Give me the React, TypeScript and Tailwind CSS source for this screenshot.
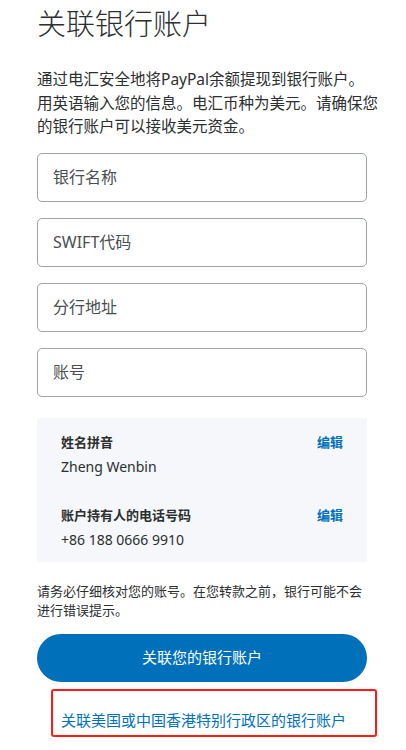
import type React from "react";

const font = { fontFamily: '"Noto Sans", "Noto Sans CJK SC", sans-serif' };

function Field({ placeholder }: { placeholder: string }) {
  return (
    <div className="h-[49px] rounded-[5px] border border-[#9da3a6] bg-white flex items-center px-[15px]">
      <span className="text-[16px] text-[#4a4d4f]">{placeholder}</span>
    </div>
  );
}

function InfoRow({ label, value, className }: { label: string; value: string; className?: string }) {
  return (
    <div className={className}>
      <div className="flex items-center justify-between">
        <p className="text-[13px] leading-[20px] font-bold text-[#2c2e2f]">{label}</p>
        <span className="text-[13px] leading-[20px] font-bold text-[#0070ba]">编辑</span>
      </div>
      <p className="mt-1 text-[14px] leading-[22px] text-[#2c2e2f]">{value}</p>
    </div>
  );
}

export default function App() {
  return (
    <div className="min-h-[750px] bg-white text-[#2c2e2f]" style={font as React.CSSProperties}>
      <div className="w-[330px] ml-[37px] pt-[6px]">
        <h1 className="text-[29px] leading-[36px] font-light text-[#2c2e2f]">关联银行账户</h1>

        <div className="mt-[26px] text-[15.5px] leading-[23.5px] text-[#2c2e2f]">
          <p className="whitespace-nowrap">通过电汇安全地将PayPal余额提现到银行账户。</p>
          <p className="whitespace-nowrap">用英语输入您的信息。电汇币种为美元。请确保您</p>
          <p className="whitespace-nowrap">的银行账户可以接收美元资金。</p>
        </div>

        <div className="mt-[14px] flex flex-col gap-[16px]">
          <Field placeholder="银行名称" />
          <Field placeholder="SWIFT代码" />
          <Field placeholder="分行地址" />
          <Field placeholder="账号" />
        </div>

        <div className="mt-[21px] bg-[#f5f7fa] pl-[24px] pr-[24px] pt-[14px] pb-[11px]">
          <InfoRow label="姓名拼音" value="Zheng Wenbin" />
          <InfoRow label="账户持有人的电话号码" value="+86 188 0666 9910" className="mt-[27px]" />
        </div>

        <div className="mt-[20px] text-[13px] leading-[19px] text-[#2c2e2f]">
          <p className="whitespace-nowrap">请务必仔细核对您的账号。在您转款之前，银行可能不会</p>
          <p className="whitespace-nowrap">进行错误提示。</p>
        </div>

        <button className="mt-[14px] w-full h-[48px] rounded-full bg-[#0070ba] text-white text-[15px] font-normal flex items-center justify-center">
          关联您的银行账户
        </button>
      </div>

      <div className="ml-[51px] mt-[7px] w-[326px] h-[48px] border-2 border-[#ff1a1a] rounded-[3px] flex items-center pl-[8px] pt-[14px]">
        <span className="text-[15px] leading-[20px] text-[#0070ba]">关联美国或中国香港特别行政区的银行账户</span>
      </div>
    </div>
  );
}
